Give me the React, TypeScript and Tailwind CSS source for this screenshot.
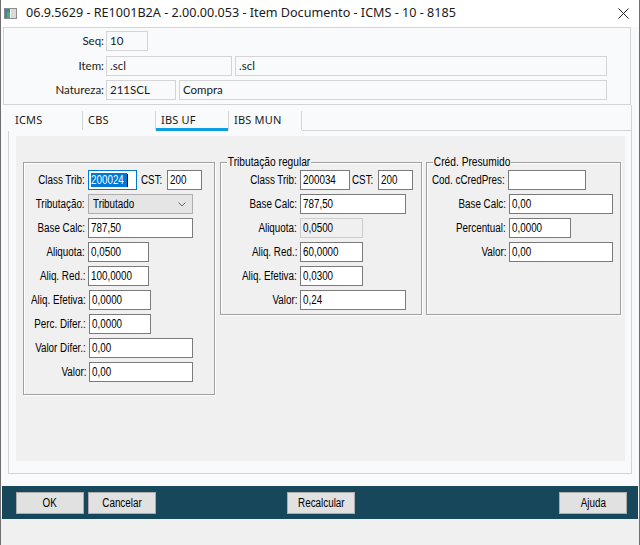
import React from "react";

// Arial Narrow is not installed: Liberation Sans squeezed horizontally stands in for it
const NARROW = "font-['Liberation_Sans',Arial,sans-serif] text-[12px]";
const UI = "font-['Lato','Liberation_Sans',sans-serif]";

function N({ children, origin = "origin-left" }: { children: React.ReactNode; origin?: string }) {
  return <span className={`inline-block shrink-0 whitespace-nowrap scale-x-[0.82] ${origin}`}>{children}</span>;
}

function Label({ text, lw, pr = "pr-[3px]" }: { text: string; lw: string; pr?: string }) {
  return (
    <div className={`${lw} ${pr} shrink-0 flex justify-end leading-none`}>
      <N origin="origin-right">{text}</N>
    </div>
  );
}

function Row({ label, lw, children }: { label: string; lw: string; children: React.ReactNode }) {
  return (
    <div className="flex items-center h-[20px]">
      <Label text={label} lw={lw} />
      {children}
    </div>
  );
}

function Input({ value, w, disabled }: { value?: string; w: string; disabled?: boolean }) {
  return (
    <div
      className={`${w} h-[20px] shrink-0 border pl-[2px] flex items-center leading-none overflow-hidden ${
        disabled ? "border-[#cccccc] bg-[#f0f0f0]" : "border-[#7a7a7a] bg-white"
      }`}
    >
      {value && <N>{value}</N>}
    </div>
  );
}

function HeaderInput({ value, w }: { value: string; w: string }) {
  return (
    <div className={`${w} h-[20px] shrink-0 border border-[#d4d4d4] bg-[#f9fafb] px-[3px] flex items-center leading-none`}>
      {value}
    </div>
  );
}

function Group({ title, className, children }: { title?: string; className: string; children: React.ReactNode }) {
  return (
    <div
      className={`relative shrink-0 border border-[#a0a0a0] shadow-[1px_1px_0_#ffffff,inset_1px_1px_0_#ffffff] pt-[7px] flex flex-col gap-[4px] ${className}`}
    >
      {title && (
        <span className="absolute left-[6px] -top-[8px] px-[1px] bg-[#f0f0f0] leading-[14px] whitespace-nowrap scale-x-[0.85] origin-left">
          {title}
        </span>
      )}
      {children}
    </div>
  );
}

function Btn({ label }: { label: string }) {
  return (
    <div className="w-[68px] h-[22px] border border-[#adadad] bg-[#e1e1e1] flex items-center justify-center leading-none text-black">
      <N origin="origin-center">{label}</N>
    </div>
  );
}

const tabs = ["ICMS", "CBS", "IBS UF", "IBS MUN"];

export default function App() {
  return (
    <div className="w-[640px] h-[545px] bg-[#f9fafb] border-x border-[#6f6f6f] flex flex-col overflow-hidden text-[#1a1a1a]">
      {/* title bar */}
      <div className="h-[27px] shrink-0 bg-white flex items-center font-['Noto_Sans','Liberation_Sans',sans-serif] text-[12.6px]">
        <svg width="13" height="11" viewBox="0 0 13 11" className="ml-[3px] mr-[9px]">
          <rect x="0.5" y="0.5" width="12" height="10" fill="#f2f2f2" stroke="#8c8c8c" />
          <rect x="1" y="1" width="5" height="9" fill="#3a86a8" />
          <rect x="3" y="4" width="3" height="6" fill="#5ea861" />
          <rect x="7" y="1" width="5" height="9" fill="#d9d9d9" />
        </svg>
        <span>06.9.5629 - RE1001B2A - 2.00.00.053 - Item Documento - ICMS - 10 - 8185</span>
        <svg width="11" height="11" viewBox="0 0 11 11" className="ml-auto mr-[10px]">
          <path d="M0.5 0.5 L10.5 10.5 M10.5 0.5 L0.5 10.5" stroke="#222" strokeWidth="1" />
        </svg>
      </div>

      {/* header fields */}
      <div className={`ml-[2px] w-[628px] h-[78px] shrink-0 border border-[#d4d4d4] pt-[3px] flex flex-col gap-[4px] ${UI} text-[11.5px]`}>
        <div className="flex items-center h-[20px]">
          <span className="w-[102px] text-right pr-[2px]">Seq:</span>
          <HeaderInput value="10" w="w-[42px]" />
        </div>
        <div className="flex items-center h-[20px] mt-[1px]">
          <span className="w-[102px] text-right pr-[2px]">Item:</span>
          <HeaderInput value=".scl" w="w-[126px]" />
          <div className="w-[3px]" />
          <HeaderInput value=".scl" w="w-[372px]" />
        </div>
        <div className="flex items-center h-[20px]">
          <span className="w-[102px] text-right pr-[2px]">Natureza:</span>
          <HeaderInput value="211SCL" w="w-[70px]" />
          <div className="w-[3px]" />
          <HeaderInput value="Compra" w="w-[428px]" />
        </div>
      </div>

      {/* tab strip */}
      <div className="h-[26px] shrink-0 flex items-end font-['Noto_Sans','Liberation_Sans',sans-serif] text-[11px]">
        <div className="w-[9px]" />
        {tabs.map((t, i) => (
          <div key={t} className="flex items-end h-full">
            <div className="relative w-[72px] h-full flex items-center pt-[4px] pl-[5px]">
              <span className="tracking-[0.2px]">{t}</span>
              {i === 2 && <div className="absolute left-0 right-0 bottom-0 h-[3px] bg-[#0a9fe0]" />}
            </div>
            <div className="w-px h-[19px] bg-[#d4d4d4] mb-[1px]" />
          </div>
        ))}
        <div className="w-[330px] h-full border-b border-r border-[#d4d4d4]" />
      </div>

      {/* tab body */}
      <div className="ml-[7px] w-[624px] h-[343px] shrink-0 border-x border-b border-[#d4d4d4] pt-[5px] pl-[7px] pr-[6px] pb-[12px]">
        <div className={`h-full bg-[#f0f0f0] pt-[26px] pl-[7px] flex items-start ${NARROW} text-black`}>
          <Group className="w-[192px] h-[233px]">
            <div className="flex items-center h-[20px]">
              <Label text="Class Trib:" lw="w-[64px]" />
              <div className="w-[49px] h-[20px] shrink-0 border border-[#0078d7] bg-white pl-[2px] flex items-center leading-none">
                <span className="bg-[#0078d7] text-white leading-[14px] inline-block w-[36px] overflow-hidden">
                  <N>200024</N>
                </span>
                <span className="w-px h-[13px] bg-black" />
              </div>
              <div className="pl-[4px] pr-[5px] leading-none w-[30px] shrink-0">
                <N>CST:</N>
              </div>
              <Input value="200" w="w-[35px]" />
            </div>
            <div className="flex items-center h-[20px]">
              <Label text="Tributação:" lw="w-[64px]" />
              <div className="w-[105px] h-[20px] border border-[#adadad] bg-[#e5e5e5] pl-[4px] pr-[6px] flex items-center justify-between leading-none">
                <N>Tributado</N>
                <svg width="8" height="5" viewBox="0 0 8 5">
                  <path d="M0.5 0.5 L4 4 L7.5 0.5" fill="none" stroke="#666" strokeWidth="1" />
                </svg>
              </div>
            </div>
            <Row label="Base Calc:" lw="w-[64px]"><Input value="787,50" w="w-[105px]" /></Row>
            <Row label="Aliquota:" lw="w-[64px]"><Input value="0,0500" w="w-[61px]" /></Row>
            <Row label="Aliq. Red.:" lw="w-[64px]"><Input value="100,0000" w="w-[61px]" /></Row>
            <Row label="Aliq. Efetiva:" lw="w-[65px]"><Input value="0,0000" w="w-[62px]" /></Row>
            <Row label="Perc. Difer.:" lw="w-[65px]"><Input value="0,0000" w="w-[62px]" /></Row>
            <Row label="Valor Difer.:" lw="w-[65px]"><Input value="0,00" w="w-[104px]" /></Row>
            <Row label="Valor:" lw="w-[65px]"><Input value="0,00" w="w-[104px]" /></Row>
          </Group>

          <div className="w-[5px] shrink-0" />

          <Group title="Tributação regular" className="w-[202px] h-[153px]">
            <div className="flex items-center h-[20px]">
              <Label text="Class Trib:" lw="w-[79px]" />
              <Input value="200034" w="w-[50px]" />
              <div className="pl-[2px] leading-none w-[28px] shrink-0">
                <N>CST:</N>
              </div>
              <Input value="200" w="w-[35px]" />
            </div>
            <Row label="Base Calc:" lw="w-[79px]"><Input value="787,50" w="w-[106px]" /></Row>
            <Row label="Aliquota:" lw="w-[79px]"><Input value="0,0500" w="w-[63px]" disabled /></Row>
            <Row label="Aliq. Red.:" lw="w-[79px]"><Input value="60,0000" w="w-[63px]" /></Row>
            <Row label="Aliq. Efetiva:" lw="w-[79px]"><Input value="0,0300" w="w-[63px]" /></Row>
            <Row label="Valor:" lw="w-[79px]"><Input value="0,24" w="w-[106px]" /></Row>
          </Group>

          <div className="w-[4px] shrink-0" />

          <Group title="Créd. Presumido" className="w-[195px] h-[153px]">
            <Row label="Cod. cCredPres:" lw="w-[81px]"><Input w="w-[78px]" /></Row>
            <Row label="Base Calc:" lw="w-[82px]"><Input value="0,00" w="w-[104px]" /></Row>
            <Row label="Percentual:" lw="w-[82px]"><Input value="0,0000" w="w-[62px]" /></Row>
            <Row label="Valor:" lw="w-[82px]"><Input value="0,00" w="w-[104px]" /></Row>
          </Group>
        </div>
      </div>

      <div className="h-[12px] shrink-0" />

      {/* footer */}
      <div className={`ml-[1px] w-[636px] h-[33px] shrink-0 bg-[#16475b] grid grid-cols-3 items-center pl-[14px] pr-[11px] ${NARROW}`}>
        <div className="flex gap-[4px]">
          <Btn label="OK" />
          <Btn label="Cancelar" />
        </div>
        <div className="flex justify-center">
          <Btn label="Recalcular" />
        </div>
        <div className="flex justify-end">
          <Btn label="Ajuda" />
        </div>
      </div>

      <div className="flex-1 bg-[#f0f0f0]" />
    </div>
  );
}
